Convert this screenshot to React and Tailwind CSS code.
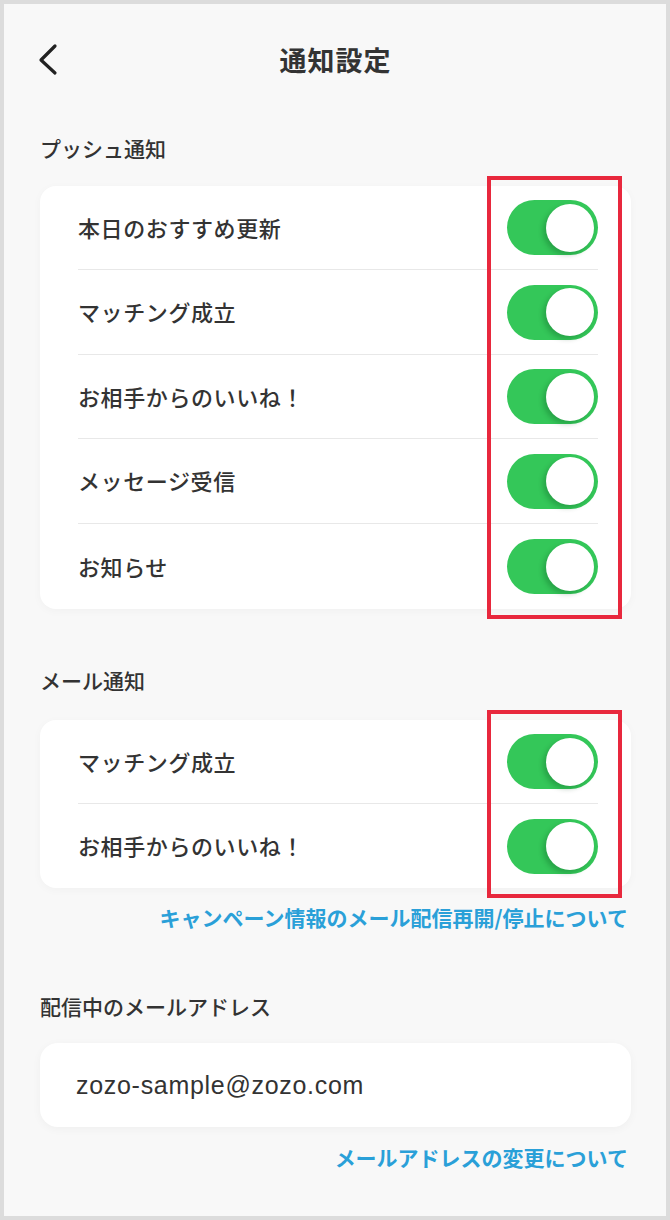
import React from "react";

const font = { fontFamily: '"Noto Sans CJK JP", "Noto Sans", sans-serif' };

function Toggle() {
  return (
    <div className="flex h-[55px] w-[91px] shrink-0 items-center justify-end rounded-full bg-[#34c759] pr-[4px]">
      <div className="h-[48px] w-[48px] rounded-full bg-white shadow-[-3px_3px_5px_rgba(0,60,20,0.25)]" />
    </div>
  );
}

function Card({ items, heights }) {
  return (
    <div className="rounded-[16px] bg-white shadow-[0_2px_10px_rgba(0,0,0,0.03)]">
      <div className="ml-[38px] mr-[33px]">
        {items.map((t, i) => (
          <div
            key={i}
            className={
              "flex items-center justify-between " +
              (heights[i] === 85 ? "h-[85px] " : "h-[84px] ") +
              (i < items.length - 1 ? "border-b border-[#e8e8e8]" : "")
            }
          >
            <span className="-mt-[2px] text-[22px] leading-[28px] font-medium tracking-[0.6px] text-[#333333]">
              {t}
            </span>
            <Toggle />
          </div>
        ))}
      </div>
    </div>
  );
}

export default function App() {
  return (
    <div className="relative h-[1220px] w-[670px] bg-[#dcdcdc] p-[4px]" style={font}>
      <div className="flex h-[1212px] flex-col bg-[#f8f8f8] pl-[36px] pr-[35px]">
        {/* header */}
        <div className="grid h-[112px] grid-cols-[1fr_auto_1fr] items-center">
          <div className="flex items-center">
            <svg width="22" height="34" viewBox="0 0 22 34" className="-ml-[2px]">
              <polyline
                points="17,3 3,17 17,30"
                fill="none"
                stroke="#222222"
                strokeWidth="3.2"
                strokeLinecap="round"
                strokeLinejoin="round"
              />
            </svg>
          </div>
          <h1 className="text-[27px] leading-[36px] font-bold tracking-[1px] text-[#333333]">
            通知設定
          </h1>
          <div />
        </div>

        <div className="mt-[18px] text-[21px] leading-[28px] font-medium text-[#333333]">
          プッシュ通知
        </div>
        <div className="mt-[24px]">
          <Card
            items={[
              "本日のおすすめ更新",
              "マッチング成立",
              "お相手からのいいね！",
              "メッセージ受信",
              "お知らせ",
            ]}
            heights={[84, 85, 84, 85, 85]}
          />
        </div>

        <div className="mt-[57px] text-[21px] leading-[28px] font-medium text-[#333333]">
          メール通知
        </div>
        <div className="mt-[26px]">
          <Card items={["マッチング成立", "お相手からのいいね！"]} heights={[84, 84]} />
        </div>

        <div className="mt-[15px] mr-[3px] text-right text-[21px] leading-[28px] font-bold text-[#2aa0d8]">
          キャンペーン情報のメール配信再開/停止について
        </div>

        <div className="mt-[61px] text-[21px] leading-[28px] font-medium text-[#333333]">
          配信中のメールアドレス
        </div>

        <div className="mt-[23px] flex h-[84px] items-center rounded-[18px] bg-white pl-[36px] shadow-[0_2px_10px_rgba(0,0,0,0.04)]">
          <span
            className="text-[25px] leading-[30px] tracking-[0.7px] text-[#333333]"
            style={{ fontFamily: '"Liberation Sans", Arial, sans-serif' }}
          >
            zozo-sample@zozo.com
          </span>
        </div>

        <div className="mt-[16px] mr-[3px] text-right text-[21px] leading-[28px] font-bold text-[#2aa0d8]">
          メールアドレスの変更について
        </div>
      </div>

      {/* annotation boxes */}
      <div className="pointer-events-none absolute left-[487px] top-[176px] h-[443px] w-[135px] border-[4px] border-[#e8283d]" />
      <div className="pointer-events-none absolute left-[487px] top-[710px] h-[188px] w-[135px] border-[4px] border-[#e8283d]" />
    </div>
  );
}
